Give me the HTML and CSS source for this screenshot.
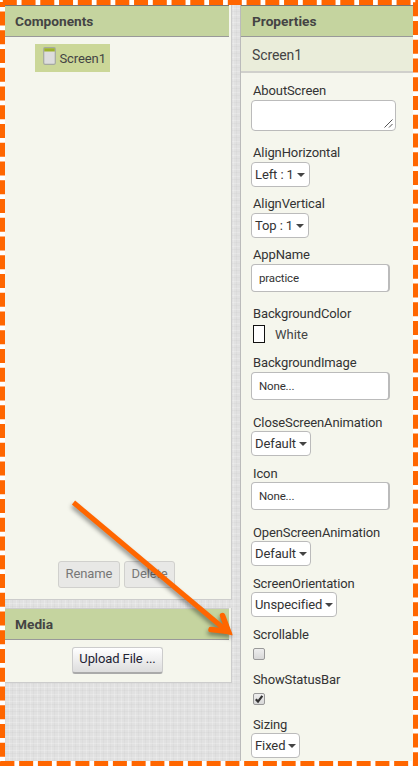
FILE: index.html
```html
<!DOCTYPE html>
<html lang="en">
<head>
<meta charset="utf-8">
<title>Designer panels</title>
<link rel="stylesheet" href="styles.css">
</head>
<body>
<div class="workspace">
  <div class="left">
    <section class="panel components">
      <h2>Components</h2>
      <div class="tree"><div class="node">
        <svg width="13" height="18" viewBox="0 0 13 18"><rect x=".7" y=".7" width="11.6" height="16.6" rx="1.2" fill="#ddd" stroke="#a5a9a0" stroke-width="1.2"/><path d="M1.2 1.2h10.6v3.3H1.2z" fill="#9cb22c"/></svg>
        <span>Screen1</span></div></div>
      <div class="actions"><button class="off rename">Rename</button><button class="off delete">Delete</button></div>
    </section>
    <section class="panel media">
      <h2>Media</h2>
      <button class="upload">Upload File ...</button>
    </section>
  </div>
  <section class="properties">
    <h2>Properties</h2>
    <div class="target">Screen1</div>
    <div class="fields">
      <div class="field area"><label>AboutScreen</label><div class="textarea"><svg width="9" height="9" viewBox="0 0 9 9"><path d="M.5 8.5l8-8M5 8.5L8.500 5" stroke="#555" fill="none"/></svg></div></div>
      <div class="field pick"><label>AlignHorizontal</label><div class="select w59">Left : 1<i></i></div></div>
      <div class="field pick"><label>AlignVertical</label><div class="select w58">Top : 1<i></i></div></div>
      <div class="field text"><label>AppName</label><div class="input">practice</div></div>
      <div class="field color"><label>BackgroundColor</label><div class="swatch"><b></b>White</div></div>
      <div class="field text"><label>BackgroundImage</label><div class="input">None...</div></div>
      <div class="field pick"><label>CloseScreenAnimation</label><div class="select w60">Default<i></i></div></div>
      <div class="field text"><label>Icon</label><div class="input">None...</div></div>
      <div class="field pick"><label>OpenScreenAnimation</label><div class="select w60">Default<i></i></div></div>
      <div class="field pick"><label>ScreenOrientation</label><div class="select w86">Unspecified<i></i></div></div>
      <div class="field check"><label>Scrollable</label><div class="box"></div></div>
      <div class="field check"><label>ShowStatusBar</label><div class="box"><svg width="10" height="10" viewBox="0 0 10 10"><path d="M1.800 5.200L4 7.600L8.300 1.800" stroke="#333" stroke-width="2.200" fill="none"/></svg></div></div>
      <div class="field pick"><label>Sizing</label><div class="select w49">Fixed<i></i></div></div>
    </div>
  </section>
</div>
<svg class="overlay" width="419" height="766" viewBox="0 0 419 766">
  <path d="M0 0H419V766H0zM5 5V761H413V5z" fill="#fff" fill-rule="evenodd"/>
  <g stroke="#f60" stroke-width="5" stroke-dasharray="14 4.75" fill="none">
    <path d="M2.500 11.500V766"/><path d="M415.500 2.200V766"/><path d="M2.800 2.500H418"/><path d="M.4 763.500H418"/><path d="M2.500 2V7"/>
  </g>
  <g class="arrow" stroke="#f60" fill="none"><path d="M73.500 502.500L228 632" stroke-width="5"/><path d="M222.500 615.500L228.500 631.500L211 629.500" stroke-width="5.500" stroke-linecap="round"/><path d="M232.500 635.500L220 632L227 622z" fill="#f60" stroke="none"/></g>
</svg>
</body>
</html>
```
FILE: styles.css
```css
*{box-sizing:border-box}
body{margin:0;width:419px;height:766px;overflow:hidden;position:relative;font:13px/17px Roboto,sans-serif;color:#444;background:#fff}
.workspace{display:flex;height:766px;padding:5px 6px 5px 5px}
.left{width:235px;flex:none;display:flex;flex-direction:column;gap:8px;
background:repeating-linear-gradient(0deg,#bbb2 0 1px,transparent 1px 3px,#fff3 3px 4px,transparent 4px 7px),repeating-linear-gradient(90deg,#bbb2 0 1px,transparent 1px 4px,#fff3 4px 5px,transparent 5px 7px),#e1e1e1}
.panel{width:227px;background:#f5f6ed;border-right:1px solid #ccc;border-bottom:1px solid #ccc}
h2{margin:0;height:32px;padding:0 10px;border-top:1px solid #777;border-bottom:1px solid #999;background:#c5d49f;font-size:13.700px;line-height:31px;font-weight:700}
.panel h2{margin-right:2px}
.components{height:595px;display:flex;flex-direction:column}
.tree{flex:1;padding:7px 30px}
.node{width:75px;height:28px;background:#cbd798;display:flex;padding:3px 7px 0 8px;gap:3.500px;letter-spacing:-.1px}
.node span{padding-top:3px}
.node svg{flex:none}
.actions{display:flex;gap:4px;padding:0 0 11px 53px}
button{font:13px/17px Roboto,sans-serif;letter-spacing:-.1px;padding:0 0 3px;height:27px;border-radius:3px;white-space:nowrap}
.off{border:1px solid #d0d0cd;background:#e8e8e6;color:#777}
.rename{width:62px}.delete{width:51px}
.media{height:75px}
.media h2{border-top-color:#ccc}
.upload{display:block;width:91px;margin:7px 0 0 67px;border:1px solid #ccc;border-bottom:2px solid #aaa;background:linear-gradient(#fff,#ddd);color:#223}
.properties{width:173px;flex:1;border-left:1px solid #bbb;background:#f5f6ed;overflow:hidden}
.properties h2{padding-left:11px}
.target{height:36px;line-height:36px;padding-left:11px;background:#eaedda;border-bottom:2px solid #d0d0cc;font-size:14px;letter-spacing:-.1px}
.fields{padding:10px 0 0 10px}
label{display:block;height:17px;line-height:16px;padding-left:2px;white-space:nowrap;color:#333;letter-spacing:-.12px}
.field:nth-child(n+7) label{line-height:17px}
.area{height:62px}.pick{height:51px}.text{height:59px}.color{height:49px}.check{height:45px}
.textarea,.input,.select{background:#fff;border:1px solid #bbb;border-radius:4px}
.textarea{width:145px;height:31px;display:flex;align-items:flex-end;justify-content:flex-end;padding:2px}
.select{height:25px;padding-left:3px;line-height:23px;display:flex;align-items:center;white-space:nowrap;letter-spacing:-.1px;color:#333}
.select i{flex:none;margin:1px 0 0 3px;border:4px solid transparent;border-top-color:#444;border-bottom:0}
.w59{width:59px}.w58{width:58px}.w60{width:60px}.w86{width:86px}.w49{width:49px}
.input{width:139px;height:28px;padding-left:7px;font-size:11.500px;letter-spacing:-.15px;line-height:26px;border-right-width:2px;color:#333}
.swatch{display:flex;height:22px;align-items:center;gap:10px;padding-left:2px}
.swatch b{width:12px;height:18px;border:1px solid #111;background:#fff}
.box{width:12px;height:12px;margin:5px 2px;border:1px solid #999;border-radius:2px;background:linear-gradient(#eee,#d8d8d8)}
.box svg{display:block}
.overlay{position:absolute;left:0;top:0}
.arrow{filter:drop-shadow(-1px 3px 2px #0006)}
```
